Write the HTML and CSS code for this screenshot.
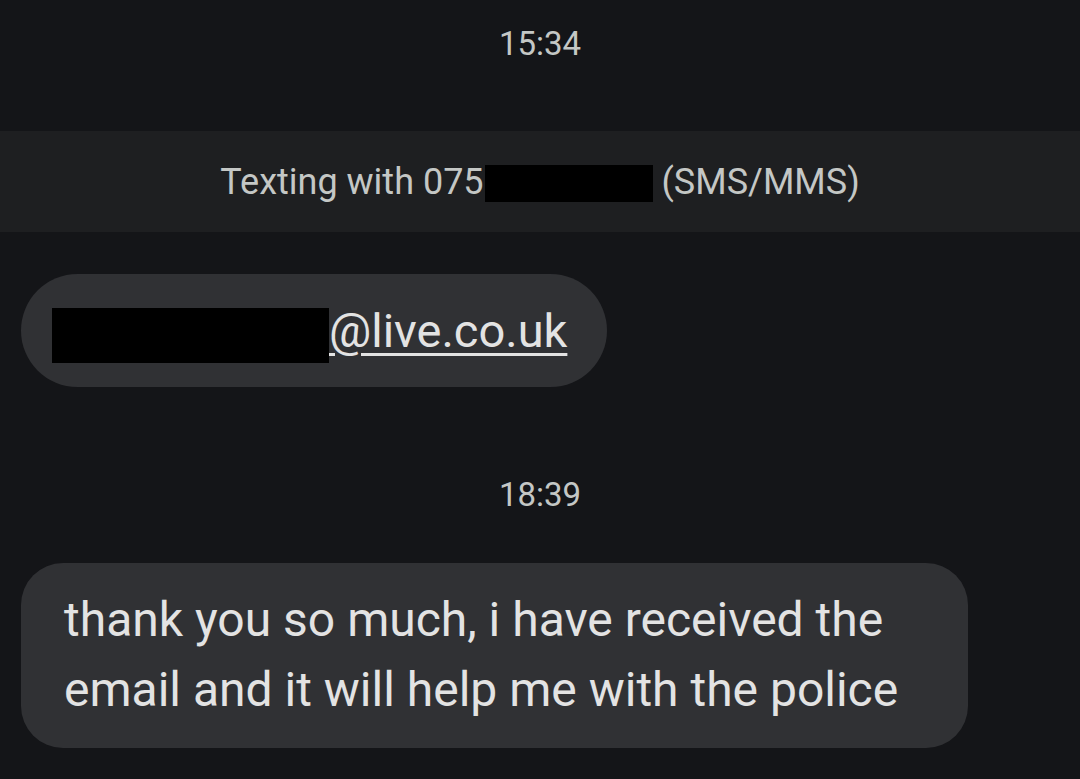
FILE: index.html
```html
<!DOCTYPE html>
<html>
<head>
<meta charset="utf-8">
<link rel="stylesheet" href="styles.css">
</head>
<body>
<div class="thread">
  <div class="stamp stamp-first">15:34</div>
  <div class="banner">Texting with 075<span class="redact redact-num"></span> (SMS/MMS)</div>
  <div class="row">
    <div class="bubble bubble-email"><span class="redact redact-mail"></span><a class="link">@live.co.uk</a></div>
  </div>
  <div class="stamp stamp-second">18:39</div>
  <div class="row">
    <div class="bubble bubble-text">thank you so much, i have received the<br>email and it will help me with the police</div>
  </div>
</div>
</body>
</html>
```

FILE: styles.css
```css
html, body {
  margin: 0;
  padding: 0;
  background: #141518;
  height: 100%;
}
body {
  font-family: Roboto, "Noto Sans", sans-serif;
  overflow: hidden;
}
.thread {
  display: flex;
  flex-direction: column;
}
.stamp {
  text-align: center;
  color: #c4c7c5;
  font-size: 33px;
  line-height: 40px;
}
.stamp-first {
  padding-top: 24px;
  height: 107px;
}
.stamp-second {
  margin-top: 88px;
  height: 88px;
  padding-top: 0;
}
.banner {
  background: #1e1f21;
  height: 101px;
  display: flex;
  align-items: center;
  justify-content: center;
  color: #c4c7c5;
  font-size: 36px;
  white-space: pre;
}
.redact {
  display: inline-block;
  background: #000;
}
.redact-num {
  width: 168px;
  height: 37px;
  margin-left: 1px;
  margin-top: 3px;
}
.row {
  display: flex;
  padding-left: 21px;
}
.bubble {
  background: #303134;
  color: #e3e3e3;
}
.bubble-email {
  margin-top: 42px;
  height: 113px;
  box-sizing: border-box;
  border-radius: 57px;
  padding: 0 40px 0 31px;
  display: flex;
  align-items: center;
  font-size: 47px;
}
.redact-mail {
  width: 277px;
  height: 55px;
  margin-top: 10px;
}
.link {
  text-decoration: underline;
  text-decoration-thickness: 3px;
  text-underline-offset: 6px;
  color: #e3e3e3;
}
.bubble-text {
  border-radius: 42px;
  padding: 22px 70px 23px 43px;
  font-size: 48px;
  line-height: 70px;
}
```
